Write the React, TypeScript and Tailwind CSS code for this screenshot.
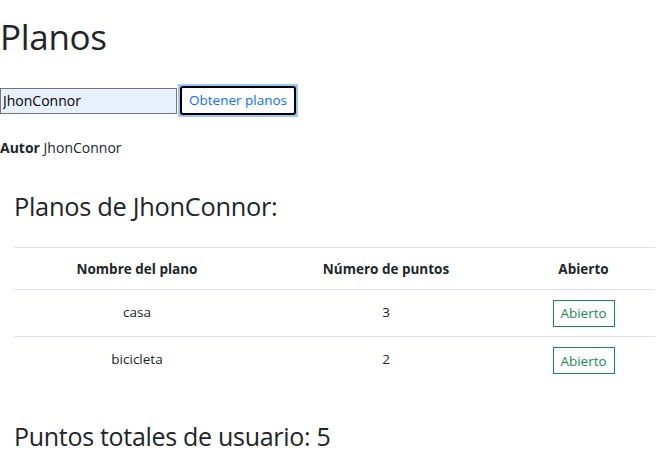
import { useState } from 'react'

const PLANOS = [
  { name: 'casa', points: 3 },
  { name: 'bicicleta', points: 2 },
]

export default function App() {
  const [author, setAuthor] = useState('JhonConnor')
  const total = PLANOS.reduce((acc, p) => acc + p.points, 0)

  return (
    <div className="font-['Segoe_UI','Open_Sans',sans-serif] text-[#212529] bg-white min-h-[454px]">
      <h1 className="text-[35px] leading-none font-medium pt-[19px] tracking-[-0.3px]">Planos</h1>

      <div className="flex items-center mt-[30px] h-[33px]">
        <input
          value={author}
          onChange={e => setAuthor(e.target.value)}
          className="w-[177px] h-[26px] bg-[#e8f0fe] border border-[#767676] px-[2px] text-[14px] text-black outline-none"
        />
        <div className="ml-[1px] p-[2px] bg-[#99c8ff] rounded-[1px]">
          <button
            type="button"
            className="h-[29px] px-[7px] bg-white border-2 border-black rounded-[3px] text-[13.5px] text-[#0d6efd]"
          >
            Obtener planos
          </button>
        </div>
      </div>

      <p className="mt-[20px] text-[14px]">
        <b className="font-bold">Autor</b> {author}
      </p>

      <div className="pl-[14px] pr-[8px]">
        <h3 className="text-[25.4px] font-medium mt-[36px] leading-none tracking-[-0.3px]">Planos de {author}:</h3>

        <table className="w-full mt-[28px] text-[13.5px] border-collapse">
          <thead>
            <tr className="border-t border-b border-[#dee2e6] h-[42px]">
              <th className="w-[246px] font-bold">Nombre del plano</th>
              <th className="w-[252px] font-bold">Número de puntos</th>
              <th className="font-bold">Abierto</th>
            </tr>
          </thead>
          <tbody>
            {PLANOS.map((p, i) => (
              <tr key={p.name} className={`h-[47px] ${i === 0 ? 'border-b border-[#dee2e6]' : ''}`}>
                <td className="text-center pb-[3px]">{p.name}</td>
                <td className="text-center pb-[3px]">{p.points}</td>
                <td className="text-center">
                  <button
                    type="button"
                    className="w-[62px] h-[27px] border border-[#198754] text-[#198754] text-[13.5px] bg-white"
                  >
                    Abierto
                  </button>
                </td>
              </tr>
            ))}
          </tbody>
        </table>

        <h3 className="text-[25px] font-medium mt-[40px] leading-none tracking-[-0.3px]">Puntos totales de usuario: {total}</h3>
      </div>
    </div>
  )
}
